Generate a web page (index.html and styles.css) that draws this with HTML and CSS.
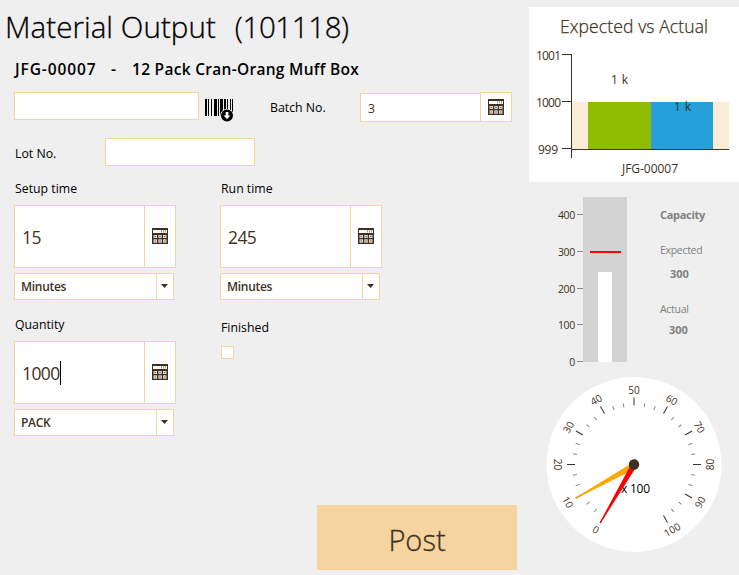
FILE: index.html
```html
<!DOCTYPE html>
<html lang="en">
<head>
    <meta charset="UTF-8">
    <meta name="viewport" content="width=device-width, initial-scale=1.0">
    <title>Material Output</title>
    <link rel="stylesheet" href="styles.css">
</head>
<body>
    <svg class="symbols">
        <symbol id="calc" viewBox="0 0 16 16">
            <rect width="16" height="16" fill="#3e3122"/>
            <rect x="1" y="2" width="14" height="3" fill="#fff"/>
            <path d="M9.500 2v2.500M11.500 2v2.500M13.500 2v2.500" stroke="#a39b90" stroke-width="1"/>
            <path d="M1.500 7H5v3H1.500zM6.300 7h3.500v3H6.300zM11 7h3.500v3H11zM1.500 11.300H5v3.500H1.500zM6.300 11.300h3.500v3.500H6.300zM11 11.300h3.500v3.500H11z" fill="#d8d5d0"/>
            <path d="M2.500 8.500h1.500M7.300 8.500h1.500M12 8.500h1.500M2.500 13h1.500M7.300 13h1.500M12 13h1.500" stroke="#796f63"/>
        </symbol>
    </svg>
    <main class="form">
        <h1>Material Output<span>(101118)</span></h1>
        <h2><span class="code">JFG-00007</span><span class="dash">-</span><span>12 Pack Cran-Orang Muff Box</span></h2>

        <div class="row scan-row">
            <div class="input scan"></div>
            <svg class="barcode" width="30" height="24" viewBox="0 0 30 24">
                <path d="M0 0h2v17H0zM3 0h1v17H3zM6 0h1v17H6zM9 0h3v17H9zM13 0h1v17h-1zM15 0h3v17h-3zM19 0h2v17h-2zM22 0h1v17h-1zM25 0h1v17h-1zM27 0h1v17h-1z"/>
                <circle cx="22" cy="16.500" r="6.800" fill="#efefef"/>
                <circle cx="22" cy="16.500" r="6"/>
                <path d="M20.600 13h2.800v3.500h2L22 20.200l-3.400-3.700h2z" fill="#fff"/>
            </svg>
            <label class="batch-label">Batch No.</label>
            <div class="batch">
                <div class="input">3</div>
                <div class="calc"><svg width="16" height="16"><use href="#calc"/></svg></div>
            </div>
        </div>

        <div class="row lot-row">
            <label>Lot No.</label>
            <div class="input lot"></div>
        </div>

        <div class="fields">
            <div class="field">
                <label>Setup time</label>
                <div class="number">
                    <div class="value">15</div>
                    <div class="calc"><svg width="16" height="16"><use href="#calc"/></svg></div>
                </div>
                <div class="select"><span>Minutes</span><i></i></div>
            </div>
            <div class="field">
                <label>Run time</label>
                <div class="number">
                    <div class="value">245</div>
                    <div class="calc"><svg width="16" height="16"><use href="#calc"/></svg></div>
                </div>
                <div class="select"><span>Minutes</span><i></i></div>
            </div>
            <div class="field">
                <label>Quantity</label>
                <div class="number">
                    <div class="value">1000<b class="caret"></b></div>
                    <div class="calc"><svg width="16" height="16"><use href="#calc"/></svg></div>
                </div>
                <div class="select"><span>PACK</span><i></i></div>
            </div>
            <div class="field finished">
                <label>Finished</label>
                <div class="checkbox"></div>
            </div>
        </div>

        <button class="post">Post</button>
    </main>

    <aside class="charts">
        <svg class="bar-chart" width="210" height="175" viewBox="0 0 210 175">
            <text class="chart-title" x="31" y="26" textLength="148">Expected vs Actual</text>
            <rect x="43" y="95" width="157" height="47" fill="#faecd7"/>
            <rect x="59" y="95" width="63" height="47" fill="#8ebc00"/>
            <rect x="122" y="95" width="62" height="47" fill="#25a0da"/>
            <path d="M42.500 47v104M33 47.500h10M33 94.500h10M33 141.500h10" stroke="#3e3122" fill="none"/>
            <path d="M42 142.500h158" stroke="#3e3122"/>
            <g class="axis">
                <text x="7" y="53" textLength="25">1001</text>
                <text x="7" y="100" textLength="25">1000</text>
                <text x="9" y="147" textLength="20">999</text>
                <text x="93" y="166" textLength="56">JFG-00007</text>
                <text x="82" y="77" textLength="17">1 k</text>
                <text x="145" y="104" textLength="17">1 k</text>
            </g>
        </svg>

        <div class="capacity">
            <svg width="100" height="180" viewBox="0 0 100 180">
                <rect x="54" y="5" width="44" height="165" fill="#d3d3d3"/>
                <rect x="69" y="80" width="14" height="90" fill="#fff"/>
                <path d="M61 60h31" stroke="#f00" stroke-width="2"/>
                <path d="M48 22.500h6M48 59.500h6M48 96.500h6M48 132.500h6M48 169.500h6" stroke="#91887c"/>
                <g class="scale">
                    <text x="46" y="27">400</text>
                    <text x="46" y="64">300</text>
                    <text x="46" y="101">200</text>
                    <text x="46" y="137">100</text>
                    <text x="46" y="174">0</text>
                </g>
            </svg>
            <div class="legend">
                <strong>Capacity</strong>
                <span>Expected</span>
                <strong class="num">300</strong>
                <span>Actual</span>
                <strong class="num last">300</strong>
            </div>
        </div>

        <svg class="dial" width="176" height="177" viewBox="-88 -88.500 176 177">
            <circle r="87.500" fill="#fff"/>
            <g id="ticks"></g>
            <text class="unit" x="-13" y="28" textLength="29">x 100</text>
            <path d="M-58.800 33.200L-58.400 34.200L2.700 3.600A4.500 4.500 0 0 0 4 -3L-1 -2z" fill="#ffa500"/>
            <path d="M-34.400 58.300L-33.500 58.900L2.200 2.500A5 5 0 0 0 1 -5.500L-2.500 -1z" fill="#f00"/>
            <circle r="5.200" fill="#3e3122"/>
        </svg>
    </aside>
    <script src="script.js"></script>
</body>
</html>
```

FILE: styles.css
```css
body {
    margin: 0;
    width: 739px;
    height: 575px;
    display: flex;
    background: #efefef;
    color: #000;
    font-family: "Open Sans", "Noto Sans", sans-serif;
    font-size: 12.300px;
    overflow: hidden;
}

* {
    box-sizing: border-box;
}

.symbols {
    display: none;
}

.form {
    width: 529px;
    display: flex;
    flex-direction: column;
    padding-left: 14px;
}

h1 {
    margin: 4px 0 0 -9px;
    height: 45px;
    line-height: 45px;
    font-size: 29.500px;
    font-weight: 300;
    letter-spacing: 0.060px;
    white-space: nowrap;
    -webkit-text-stroke: 0.300px #000;
}

h1 span {
    margin-left: 19px;
    letter-spacing: -0.400px;
}

h2 {
    display: flex;
    margin: 8px 0 0 1px;
    height: 24px;
    line-height: 24px;
    font-size: 15.500px;
    font-weight: 600;
    white-space: nowrap;
    letter-spacing: 0.290px;
}

.code {
    width: 96px;
    letter-spacing: 0.900px;
}

.dash {
    width: 21px;
}

.row {
    display: flex;
}

.scan-row {
    height: 30px;
    margin-top: 11px;
}

.input {
    background: #fff;
    border: 1px solid #f5d4a0;
    height: 28px;
}

.scan {
    width: 185px;
}

.barcode {
    margin: 7px 0 0 6px;
}

.batch-label {
    width: 90px;
    margin-left: 35px;
    line-height: 31px;
}

.batch {
    display: flex;
}

.batch .input {
    width: 121px;
    height: 29px;
    margin-top: 1px;
    padding-left: 7px;
    line-height: 29px;
    color: #3e3122;
}

.calc {
    width: 32px;
    margin-left: -1px;
    background: #fff;
    border: 1px solid #f5d4a0;
    display: flex;
    align-items: center;
    justify-content: center;
}

.number .calc {
    padding-bottom: 1px;
}

.lot-row {
    margin-top: 16px;
    line-height: 31px;
}

.lot-row label {
    width: 91px;
    padding-left: 1px;
}

.lot {
    width: 150px;
}

.fields {
    display: grid;
    grid-template-columns: 206px 206px;
    grid-template-rows: 136px 136px;
    margin-top: 8px;
}

.field label {
    display: block;
    height: 28px;
    padding-left: 1px;
    line-height: 23px;
}

.number {
    display: flex;
    height: 63px;
}

.value {
    width: 131px;
    padding-left: 7px;
    display: flex;
    align-items: center;
    background: #fff;
    border: 1px solid #f5d4a0;
    color: #3e3122;
    font-size: 17.500px;
    font-weight: 400;
    letter-spacing: -0.600px;
}

.caret {
    width: 1px;
    height: 24px;
    background: #000;
}

.select {
    width: 160px;
    height: 27px;
    margin-top: 5px;
    display: flex;
    background: #fff;
    border: 1px solid #f5d4a0;
    color: #3e3122;
    font-size: 12px;
    font-weight: 600;
    line-height: 25px;
    letter-spacing: -0.300px;
}

.select span {
    width: 142px;
    padding-left: 6px;
    border-right: 1px solid #f5d4a0;
}

.select i {
    width: 7px;
    height: 4px;
    margin: 10px 0 0 4px;
    background: #3e3122;
    clip-path: polygon(0 0, 100% 0, 50% 100%);
}

.finished label {
    padding-top: 3px;
    height: 33px;
}

.checkbox {
    width: 13px;
    height: 13px;
    margin-left: 1px;
    background: #fff;
    border: 1px solid #f5d4a0;
}

.post {
    width: 200px;
    height: 65px;
    margin: 56px 0 0 303px;
    padding: 3px 0 0;
    border: none;
    background: #f5d4a0;
    color: #3e3122;
    font-family: inherit;
    font-size: 29px;
    font-weight: 300;
    -webkit-text-stroke: 0.300px #3e3122;
}

.charts {
    width: 210px;
    padding-top: 7px;
}

svg {
    display: block;
}

svg text {
    fill: #3e3122;
}

.bar-chart {
    background: #fff;
}

.chart-title {
    font-size: 17.500px;
    font-weight: 300;
    stroke: #3e3122;
    stroke-width: 0.250px;
}

.axis {
    font-size: 12px;
}

.capacity {
    display: flex;
    margin-top: 10px;
    height: 180px;
}

.scale {
    font-size: 10.500px;
    letter-spacing: -0.300px;
    text-anchor: end;
}

.legend {
    display: flex;
    flex-direction: column;
    margin: 14px 0 0 31px;
    color: #808080;
    font-size: 11px;
    line-height: 18px;
    letter-spacing: -0.300px;
}

.legend span {
    margin-top: 17px;
    font-size: 10.500px;
}

.legend .num {
    margin: 6px 0 0 10px;
    letter-spacing: 0;
}

.legend .last {
    margin: 3px 0 0 9px;
}

.dial {
    margin: 4px 0 0 17px;
}

.dial text {
    font-size: 10px;
    text-anchor: middle;
}

.dial .unit {
    fill: #000;
    font-size: 12px;
    text-anchor: start;
}
```

FILE: script.js
```js
const ns = 'http://www.w3.org/2000/svg';
const ticks = document.getElementById('ticks');

// scale runs from 0 at 210deg clockwise to 100 at 150deg
for (let i = 0; i <= 30; i++) {
    const angle = (210 + i * 10) % 360;
    const major = i % 3 === 0;

    const line = document.createElementNS(ns, 'line');
    line.setAttribute('y1', major ? -67 : -62);
    line.setAttribute('y2', major ? -59 : -58);
    line.setAttribute('stroke', major ? '#3e3122' : '#91887c');
    line.setAttribute('transform', `rotate(${angle})`);
    ticks.appendChild(line);

    if (major) {
        // turn the lower labels round to face the other way
        const turn = angle >= 90 && angle <= 270 ? angle - 180 : angle;
        const x = 76 * Math.sin(angle * Math.PI / 180);
        const y = -75 * Math.cos(angle * Math.PI / 180);
        const text = document.createElementNS(ns, 'text');
        text.setAttribute('transform', `translate(${x} ${y}) rotate(${turn})`);
        text.setAttribute('dy', 4);
        text.textContent = i / 3 * 10;
        ticks.appendChild(text);
    }
}
```
